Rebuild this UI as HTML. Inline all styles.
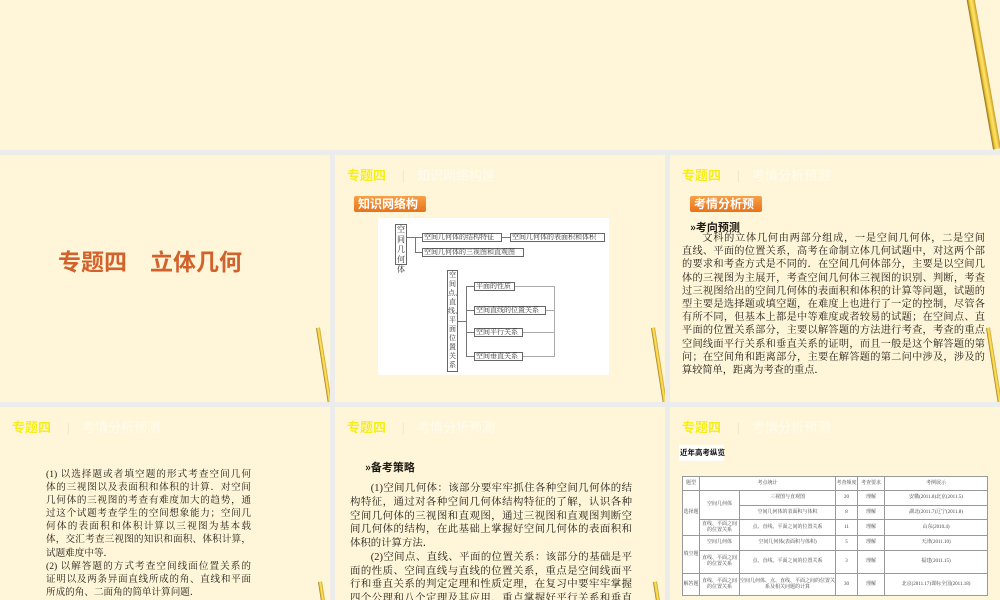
<!DOCTYPE html>
<html><head><meta charset="utf-8"><style>
*{margin:0;padding:0;box-sizing:border-box}
body{width:1000px;height:600px;background:#ececea;position:relative;overflow:hidden;font-family:"Liberation Serif","Noto Serif CJK SC","Noto Sans CJK SC",serif}
.s{position:absolute;background:#fff6d9;overflow:hidden}
.a{position:absolute}
.hd{position:absolute;left:12px;top:10px;font:bold 13px "Liberation Sans","Noto Sans CJK SC",sans-serif;color:#f6ee1a;white-space:nowrap}
.hd span{color:#fffbee;font-weight:normal;margin-left:12px}
.lb{position:absolute;height:16px;background:linear-gradient(#f7a048,#e6731c);border-radius:2px;color:#fff;font:bold 12px "Noto Sans CJK SC",sans-serif;line-height:15px;padding-left:4px;white-space:nowrap;overflow:visible}
.pencil{position:absolute;background:linear-gradient(90deg,#8a6a20,#f4cf3a 30%,#ffe36a 60%,#c99a20);transform-origin:top left}
.tx{position:absolute;color:#1e1a14;font-family:"Liberation Serif","Noto Serif CJK SC","Noto Sans CJK SC",serif}
.tx div{text-align:justify;text-align-last:justify;overflow:hidden;height:inherit}
.tx div.e{text-align-last:left}
.bx{position:absolute;border:1px solid #666;background:#fff;font-size:7px;line-height:7px;color:#333;white-space:nowrap;padding:0 1px}
.vb{position:absolute;border:1px solid #666;background:#fff;font-size:8px;line-height:10px;color:#333;text-align:center}
.ln{position:absolute;background:#777}
table{border-collapse:collapse;font-size:5px;color:#444;background:#fff;table-layout:fixed}
td{border:1px solid #999;text-align:center;line-height:6px;overflow:hidden}
</style></head><body>

<div class="s" style="left:0;top:0;width:1000px;height:150px">
<div class="pencil" style="left:966px;top:-4px;width:8px;height:156px;transform:rotate(-10deg)"></div>
</div>

<div class="s" style="left:0;top:155px;width:330px;height:247px">
<div class="a" style="left:58px;top:88px;font:bold 23px 'Noto Sans CJK SC',sans-serif;color:#d2622c;white-space:nowrap">专题四　立体几何</div>
<div class="pencil" style="left:316px;top:173px;width:4px;height:75px;transform:rotate(-9deg)"></div>
</div>

<div class="s" style="left:335px;top:155px;width:330px;height:247px">
<div class="hd">专题四 <span style="color:#f3e6c4">|</span><span>知识网络构建</span></div>
<div class="lb" style="left:19px;top:41px;width:72px">知识网络构</div>
<div class="a" style="left:43px;top:63px;width:231px;height:157px;background:#fff"></div>
<div class="vb" style="left:60px;top:69px;width:12px;height:41px">空间几何体</div>
<div class="ln" style="left:72px;top:82px;width:15px;height:1px"></div>
<div class="ln" style="left:80px;top:82px;width:1px;height:15px"></div>
<div class="ln" style="left:80px;top:97px;width:7px;height:1px"></div>
<div class="bx" style="left:87px;top:78px;width:80px;height:9px">空间几何体的结构特征</div>
<div class="ln" style="left:167px;top:82px;width:8px;height:1px"></div>
<div class="bx" style="left:175px;top:78px;width:95px;height:9px">空间几何体的表面积和体积</div>
<div class="bx" style="left:87px;top:93px;width:102px;height:9px">空间几何体的三视图和直观图</div>
<div class="vb" style="left:112px;top:115px;width:11px;height:102px;font-size:7px;line-height:9px">空间点、直线、平面位置关系</div>
<div class="ln" style="left:123px;top:166px;width:8px;height:1px"></div>
<div class="ln" style="left:131px;top:131px;width:1px;height:71px"></div>
<div class="bx" style="left:139px;top:127px;width:41px;height:9px">平面的性质</div>
<div class="bx" style="left:139px;top:151px;width:72px;height:9px">空间直线的位置关系</div>
<div class="bx" style="left:139px;top:173px;width:49px;height:9px">空间平行关系</div>
<div class="bx" style="left:139px;top:197px;width:49px;height:9px">空间垂直关系</div>
<div class="ln" style="left:132px;top:131px;width:7px;height:1px"></div>
<div class="ln" style="left:132px;top:155px;width:7px;height:1px"></div>
<div class="ln" style="left:132px;top:177px;width:7px;height:1px"></div>
<div class="ln" style="left:132px;top:201px;width:7px;height:1px"></div>
<div class="ln" style="left:219px;top:131px;width:1px;height:71px;background:#aaa"></div>
<div class="ln" style="left:180px;top:131px;width:39px;height:1px;background:#aaa"></div>
<div class="ln" style="left:211px;top:155px;width:8px;height:1px;background:#aaa"></div>
<div class="ln" style="left:188px;top:177px;width:31px;height:1px;background:#aaa"></div>
<div class="ln" style="left:188px;top:201px;width:31px;height:1px;background:#aaa"></div>
<div class="pencil" style="left:316px;top:173px;width:4px;height:75px;transform:rotate(-9deg)"></div>
</div>

<div class="s" style="left:670px;top:155px;width:330px;height:247px">
<div class="hd">专题四 <span style="color:#f3e6c4">|</span><span>考情分析预测</span></div>
<div class="lb" style="left:20px;top:41px;width:72px">考情分析预</div>
<div class="a" style="left:20px;top:64px;font:bold 11px 'Noto Sans CJK SC',sans-serif;color:#1e1a14">»考向预测</div>
<div class="tx" style="left:12px;top:77px;width:303px;font-size:10.2px;line-height:13.2px;height:13.2px">
<div style="padding-left:2em">文科的立体几何由两部分组成，一是空间几何体，二是空间点、</div>
<div>直线、平面的位置关系，高考在命制立体几何试题中，对这两个部分</div>
<div>的要求和考查方式是不同的．在空间几何体部分，主要是以空间几何</div>
<div>体的三视图为主展开，考查空间几何体三视图的识别、判断，考查通</div>
<div>过三视图给出的空间几何体的表面积和体积的计算等问题，试题的题</div>
<div>型主要是选择题或填空题，在难度上也进行了一定的控制，尽管各地</div>
<div>有所不同，但基本上都是中等难度或者较易的试题；在空间点、直线、</div>
<div>平面的位置关系部分，主要以解答题的方法进行考查，考查的重点是</div>
<div>空间线面平行关系和垂直关系的证明，而且一般是这个解答题的第一</div>
<div>问；在空间角和距离部分，主要在解答题的第二问中涉及，涉及的计</div>
<div class="e">算较简单，距离为考查的重点．</div>
</div>
<div class="pencil" style="left:316px;top:173px;width:4px;height:75px;transform:rotate(-9deg)"></div>
</div>

<div class="s" style="left:0;top:407px;width:330px;height:193px">
<div class="hd">专题四 <span style="color:#f3e6c4">|</span><span>考情分析预测</span></div>
<div class="tx" style="left:46px;top:61px;width:205px;font-size:9.6px;line-height:13.1px;height:13.1px">
<div>(1) 以选择题或者填空题的形式考查空间几何</div>
<div>体的三视图以及表面积和体积的计算．对空间</div>
<div>几何体的三视图的考查有难度加大的趋势，通</div>
<div>过这个试题考查学生的空间想象能力；空间几</div>
<div>何体的表面积和体积计算以三视图为基本载</div>
<div>体，交汇考查三视图的知识和面积、体积计算，</div>
<div class="e">试题难度中等．</div>
<div>(2) 以解答题的方式考查空间线面位置关系的</div>
<div>证明以及两条异面直线所成的角、直线和平面</div>
<div class="e">所成的角、二面角的简单计算问题．</div>
</div>
<div class="pencil" style="left:318px;top:175px;width:4px;height:40px;transform:rotate(-9deg)"></div>
</div>

<div class="s" style="left:335px;top:407px;width:330px;height:193px">
<div class="hd">专题四 <span style="color:#f3e6c4">|</span><span>考情分析预测</span></div>
<div class="a" style="left:30px;top:52px;font:bold 11px 'Noto Sans CJK SC',sans-serif;color:#1e1a14">»备考策略</div>
<div class="tx" style="left:15px;top:75px;width:282px;font-size:10.4px;line-height:13.75px;height:13.75px">
<div style="padding-left:2em">(1)空间几何体：该部分要牢牢抓住各种空间几何体的结</div>
<div>构特征，通过对各种空间几何体结构特征的了解，认识各种</div>
<div>空间几何体的三视图和直观图，通过三视图和直观图判断空</div>
<div>间几何体的结构，在此基础上掌握好空间几何体的表面积和</div>
<div class="e">体积的计算方法．</div>
<div style="padding-left:2em">(2)空间点、直线、平面的位置关系：该部分的基础是平</div>
<div>面的性质、空间直线与直线的位置关系，重点是空间线面平</div>
<div>行和垂直关系的判定定理和性质定理，在复习中要牢牢掌握</div>
<div>四个公理和八个定理及其应用，重点掌握好平行关系和垂直</div>
<div class="e">关系的相互转化．</div>
</div>
<div class="pencil" style="left:318px;top:175px;width:4px;height:40px;transform:rotate(-9deg)"></div>
</div>

<div class="s" style="left:670px;top:407px;width:330px;height:193px">
<div class="hd">专题四 <span style="color:#f3e6c4">|</span><span>考情分析预测</span></div>
<div class="a" style="left:9px;top:38px;width:45px;height:16px;background:#fff;font:bold 7.5px 'Noto Sans CJK SC',sans-serif;color:#111;line-height:16px;padding-left:1px;white-space:nowrap">近年高考纵览</div>
<div class="a" style="left:12px;top:69px">
<table style="width:306px">
<col style="width:17px"><col style="width:40px"><col style="width:96px"><col style="width:22px"><col style="width:27px"><col>
<tr style="height:14px"><td>题型</td><td colspan="2">考点统计</td><td>考查频度</td><td>考查要求</td><td>考例展示</td></tr>
<tr style="height:15px"><td rowspan="3">选择题</td><td rowspan="2">空间几何体</td><td>三视图与直观图</td><td>20</td><td>理解</td><td>安徽(2011.8)北京(2011.5)</td></tr>
<tr style="height:14px"><td>空间几何体的表面积与体积</td><td>8</td><td>理解</td><td>湖北(2011.7)辽宁(2011.8)</td></tr>
<tr style="height:16px"><td>直线、平面之间的位置关系</td><td>点、直线、平面之间的位置关系</td><td>11</td><td>理解</td><td>山东(2010.4)</td></tr>
<tr style="height:15px"><td rowspan="2">填空题</td><td>空间几何体</td><td>空间几何体(表面积与体积)</td><td>5</td><td>理解</td><td>天津(2011.10)</td></tr>
<tr style="height:23px"><td>直线、平面之间的位置关系</td><td>点、直线、平面之间的位置关系</td><td>3</td><td>理解</td><td>福建(2011.15)</td></tr>
<tr style="height:22px"><td>解答题</td><td>直线、平面之间的位置关系</td><td>空间几何体、点、直线、平面之间的位置关系及相关问题的计算</td><td>30</td><td>理解</td><td>北京(2011.17)课标全国(2011.18)</td></tr>
</table></div>
</div>
</body></html>
